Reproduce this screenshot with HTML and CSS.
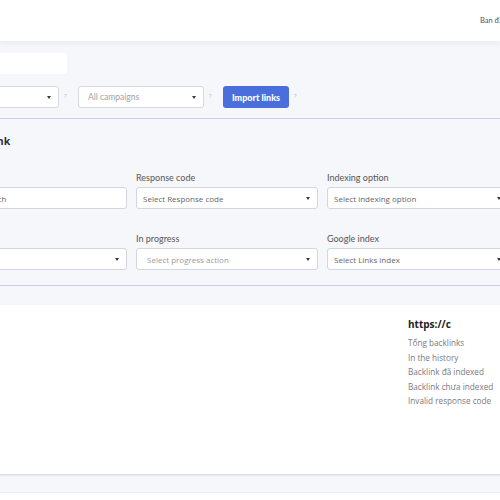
FILE: index.html
```html
<!DOCTYPE html>
<html lang="vi">
<head>
<meta charset="utf-8">
<title>Backlinks</title>
<link rel="stylesheet" href="styles.css">
</head>
<body>
<header class="topbar">
  <div class="user">Ban đầu tiên</div>
</header>
<main class="main">
  <div class="range"></div>
  <div class="toolbar">
    <div class="field">
      <div class="select sel-a"><span>All projects</span><i class="caret"></i></div>
      <span class="help">?</span>
    </div>
    <div class="field">
      <div class="select sel-b"><span>All campaigns</span><i class="caret"></i></div>
      <span class="help">?</span>
    </div>
    <div class="field">
      <button class="btn">Import links</button>
      <span class="help">?</span>
    </div>
  </div>

  <section class="filter">
    <h2 class="filter-title">Lọc backlink</h2>
    <div class="grid">
      <div class="cell">
        <label class="label">Search</label>
        <div class="input"><span>Type to search</span></div>
      </div>
      <div class="cell">
        <label class="label">Response code</label>
        <div class="input"><span>Select Response code</span><i class="caret"></i></div>
      </div>
      <div class="cell">
        <label class="label">Indexing option</label>
        <div class="input"><span>Select indexing option</span><i class="caret"></i></div>
      </div>
      <div class="cell">
        <label class="label">Status</label>
        <div class="input"><span></span><i class="caret"></i></div>
      </div>
      <div class="cell">
        <label class="label">In progress</label>
        <div class="input light"><span>Select progress action</span><i class="caret"></i></div>
      </div>
      <div class="cell">
        <label class="label">Google index</label>
        <div class="input"><span>Select Links index</span><i class="caret"></i></div>
      </div>
    </div>
  </section>

  <section class="stats">
    <div class="chart"></div>
    <div class="legend">
      <div class="legend-title">https://campaign.example.com</div>
      <ul class="legend-list">
        <li>Tổng backlinks</li>
        <li>In the history</li>
        <li>Backlink đã indexed</li>
        <li>Backlink chưa indexed</li>
        <li>Invalid response code</li>
      </ul>
    </div>
  </section>

  <section class="next"></section>
</main>
</body>
</html>
```

FILE: styles.css
```css
html, body {
  margin: 0;
  padding: 0;
}
body {
  background: #f5f7fb;
  font-family: "Open Sans", "Liberation Sans", sans-serif;
  overflow: hidden;
  width: 500px;
  height: 500px;
}
.topbar {
  height: 41px;
  background: #fff;
  box-shadow: 0 2px 6px rgba(30, 40, 80, 0.07);
  display: flex;
  align-items: center;
  overflow: hidden;
  position: relative;
  z-index: 1;
}
.user {
  padding-left: 480px;
  white-space: nowrap;
  font-family: Lato, "Open Sans", sans-serif;
  font-size: 7.5px;
  color: #555;
}
.main {
  margin-left: -60px;
  width: 620px;
}
.range {
  width: 127px;
  height: 21px;
  background: #fff;
  border-radius: 3px;
  margin-top: 12px;
}
.toolbar {
  display: flex;
  align-items: center;
  gap: 10px;
  margin-top: 12px;
  height: 22px;
}
.field {
  display: flex;
  align-items: center;
  gap: 5px;
}
.select {
  height: 22px;
  box-sizing: border-box;
  border: 1px solid #d6d9e1;
  border-radius: 3px;
  background: #fff;
  display: flex;
  align-items: center;
  justify-content: space-between;
  padding: 0 7px 0 9px;
  font-family: Lato, "Open Sans", sans-serif;
  font-size: 8.5px;
  color: #a0a0a8;
}
.sel-a { width: 119px; }
.sel-b { width: 126px; }
.caret {
  width: 0;
  height: 0;
  border-left: 2.5px solid transparent;
  border-right: 2.5px solid transparent;
  border-top: 3px solid #3a3a3a;
  flex: none;
}
.help {
  width: 4px;
  font-size: 6px;
  color: #aab4d2;
  line-height: 1;
  margin-top: -2px;
}
.btn {
  height: 22px;
  border: 0;
  border-radius: 3px;
  background: #4a6fdc;
  color: #fff;
  font-family: Lato, "Open Sans", sans-serif;
  font-weight: 900;
  font-size: 9px;
  padding: 0 6px;
  width: 66px;
}
.filter {
  margin-top: 10px;
  border-top: 1px solid #c8ceef;
  border-bottom: 1px solid #c9cee9;
  padding: 15px 0 15px 5px;
}
.filter-title {
  margin: 0;
  font-size: 10.5px;
  font-weight: 700;
  line-height: 14px;
  color: #2e2e33;
}
.grid {
  margin-top: 24px;
  display: grid;
  grid-template-columns: repeat(3, 182px);
  column-gap: 9px;
  row-gap: 24px;
}
.label {
  display: block;
  font-family: Lato, "Open Sans", sans-serif;
  font-size: 9px;
  line-height: 12px;
  color: #555;
  margin-bottom: 3px;
}
.input {
  height: 22px;
  box-sizing: border-box;
  border: 1px solid #d3d6de;
  border-radius: 3px;
  background: #fff;
  display: flex;
  align-items: center;
  justify-content: space-between;
  padding: 0 7px 0 6px;
  font-size: 8px;
  color: #666;
}
.input.light {
  color: #9a9aa2;
  padding-left: 10px;
}
.stats {
  margin-top: 19px;
  height: 169px;
  background: #fff;
  box-shadow: 0 1px 2px rgba(0, 0, 0, 0.14);
  display: flex;
}
.chart {
  flex: 0 0 468px;
}
.legend {
  padding-top: 12px;
}
.legend-title {
  width: 43px;
  overflow: hidden;
  white-space: nowrap;
  font-size: 10px;
  font-weight: 700;
  line-height: 14px;
  color: #222;
}
.legend-list {
  list-style: none;
  margin: 5px 0 0;
  padding: 0;
  font-size: 8.2px;
  line-height: 14.5px;
  color: #7a7a82;
  white-space: nowrap;
}
.next {
  margin-top: 18px;
  height: 40px;
  background: #fff;
  border-top: 1px solid #eceef3;
}
```
